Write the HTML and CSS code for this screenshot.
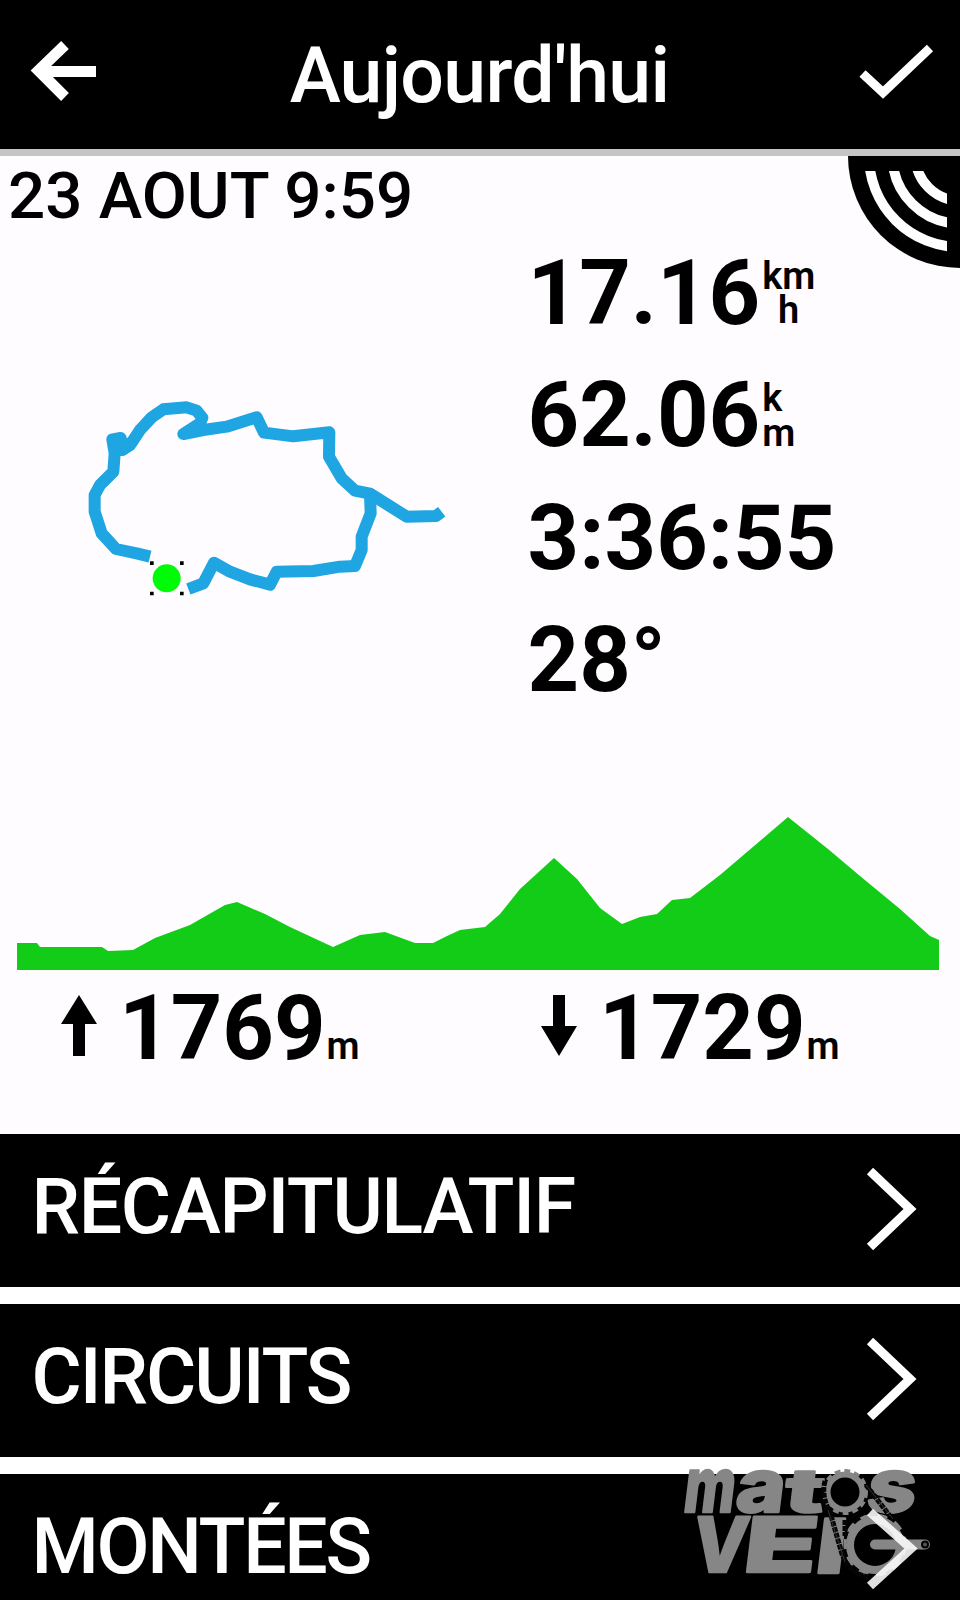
FILE: index.html
```html
<!DOCTYPE html>
<html lang="fr">
<head>
<meta charset="utf-8">
<title>Aujourd'hui</title>
<link rel="stylesheet" href="styles.css">
</head>
<body>
<div class="screen">
  <header class="topbar">
    <svg class="icon" width="72" height="64" viewBox="28 38 72 64"><path d="M65 45 38.500 70.500 65 97M40 71.500H96" fill="none" stroke="#fff" stroke-width="11"/></svg>
    <h1 class="title">Aujourd'hui</h1>
    <svg class="icon" width="78" height="64" viewBox="856 40 78 64"><path d="M862.500 73.500 883 92.500 930 48" fill="none" stroke="#fff" stroke-width="9"/></svg>
  </header>

  <main class="summary">
    <svg class="signal" width="112" height="112" viewBox="0 0 112 112">
      <defs><clipPath id="waves"><rect x="0" y="15" width="99" height="97"/></clipPath></defs>
      <circle cx="112" cy="0" r="112"/>
      <g clip-path="url(#waves)" fill="none" stroke="#fff" stroke-width="10">
        <circle cx="112" cy="0" r="91"/><circle cx="112" cy="0" r="67.500"/><circle cx="112" cy="0" r="44.500"/>
      </g>
    </svg>
    <p class="date">23 AOUT 9:59</p>
    <div class="overview">
      <svg class="track" width="420" height="250" viewBox="0 0 1260 750">
        <g fill="none" stroke="#1ea5e2" stroke-width="36" stroke-linejoin="round">
          <path d="M270 560 230 550 168 537 125 490 104 425 104 375 120 345 160 305 164 250 157 208 182 204 187 240 215 218 240 180 275 142 310 118 380 112 410 122 427 143 420 160 370 192 430 180 500 170 590 142 612 188 700 199 808 187 807 260 845 325 885 362 930 371 1040 440 1128 438 1145 425"/>
          <path d="M160 212 210 225 185 240M930 371 932 430 905 500 905 540 885 588 840 590 760 603 650 605 630 644 570 628 510 605 462 578 430 640 385 657"/>
        </g>
        <circle cx="320" cy="625" r="42" fill="#00fb08"/>
        <path d="M270 574h11v11h-11zM360 574h11v11h-11zM270 665h11v11h-11zM360 665h11v11h-11z"/>
      </svg>
      <ul class="stats">
        <li>17.16<span class="unit centered"><span>km</span><span>h</span></span></li>
        <li>62.06<span class="unit"><span>k</span><span>m</span></span></li>
        <li>3:36:55</li>
        <li>28°</li>
      </ul>
    </div>
    <svg class="profile" width="960" height="155" viewBox="0 816 960 155">
      <path fill="#13cc18" d="M17 943H37L40 947H102L108 951 133 950 155 938 190 925 225 905 237 902 265 914 290 927 333 947 360 935 385 932 415 943 433 943 447 936 460 930 485 927 500 914 520 889 554 858 577 879 600 908 622 924 640 917 657 914 672 900 690 898 720 875 788 817 828 849 860 876 900 909 930 936 939 940V970H17Z"/>
    </svg>
    <div class="elevation">
      <div class="climb">
        <svg width="36" height="61" viewBox="0 0 36 61"><path d="M18 0 36 29H24V61H12V29H0Z"/></svg>
        <span class="value">1769</span><span class="metre">m</span>
      </div>
      <div class="climb">
        <svg width="36" height="61" viewBox="0 0 36 61"><path d="M18 61 36 31H24V0H12V31H0Z"/></svg>
        <span class="value">1729</span><span class="metre">m</span>
      </div>
    </div>
  </main>

  <nav class="menu">
    <a class="item"><span class="recap">RÉCAPITULATIF</span><svg class="chevron" width="52" height="84" viewBox="0 0 52 84"><path d="M5 4 45 42 5 80"/></svg></a>
    <a class="item"><span class="circuits">CIRCUITS</span><svg class="chevron" width="52" height="84" viewBox="0 0 52 84"><path d="M5 4 45 42 5 80"/></svg></a>
    <a class="item"><span class="montees">MONTÉES</span></a>
  </nav>

  <svg class="brand" width="280" height="135" viewBox="660 1465 280 135">
    <g class="letters">
      <text transform="translate(682 1512) skewX(-7)" font-size="76" textLength="51" lengthAdjust="spacingAndGlyphs">m</text>
      <text transform="translate(734 1512) skewX(-7)" font-size="74" textLength="49" lengthAdjust="spacingAndGlyphs">a</text>
      <text transform="translate(783 1512) skewX(-7)" font-size="60" textLength="39" lengthAdjust="spacingAndGlyphs">t</text>
      <text transform="translate(865 1512) skewX(-7)" font-size="74" textLength="49" lengthAdjust="spacingAndGlyphs">s</text>
      <text transform="translate(690 1572) skewX(-7)" font-size="76" textLength="55" lengthAdjust="spacingAndGlyphs">V</text>
      <text transform="translate(741 1572) skewX(-7)" font-size="76" textLength="74" lengthAdjust="spacingAndGlyphs">E</text>
      <text transform="translate(813 1573) skewX(-7)" font-size="75" textLength="31" lengthAdjust="spacingAndGlyphs">l</text>
    </g>
    <g fill="none">
      <circle cx="845" cy="1492" r="17.500" fill="#000" stroke="#868686" stroke-width="6"/>
      <circle cx="845" cy="1492" r="21.500" stroke="#868686" stroke-width="3" stroke-dasharray="6 4"/>
      <circle cx="875" cy="1545" r="25" fill="#000" stroke="#868686" stroke-width="8"/>
      <circle cx="875" cy="1545" r="30" stroke="#868686" stroke-width="3" stroke-dasharray="10 8"/>
      <path d="M825 1481Q821 1496 830 1512L842 1554Q850 1575 870 1577M866 1485 890 1516M845 1520V1536" stroke="#050505" stroke-width="5" stroke-dasharray="5 1"/>
      <path d="M866 1485 893 1519M828 1510 845 1562" stroke="#333" stroke-width="1"/>
      <path d="M875 1544.500H925" stroke="#868686" stroke-width="10" stroke-linecap="round"/>
      <circle cx="925" cy="1544.500" r="3" fill="#555" stroke="#000" stroke-width="2"/>
    </g>
    <path d="M870 1512 911 1548.500 870 1586" fill="none" stroke="#fff" stroke-opacity=".88" stroke-width="9"/>
  </svg>
</div>
</body>
</html>
```
FILE: styles.css
```css
* { box-sizing: border-box; }
body { margin: 0; background: #fefcfe; }
.screen {
  position: relative;
  width: 960px;
  height: 1600px;
  overflow: hidden;
  font-family: Roboto, "Liberation Sans", sans-serif;
  color: #000;
  display: flex;
  flex-direction: column;
}
.topbar {
  flex: none;
  height: 156px;
  padding: 0 26px 0 28px;
  background: #000;
  border-bottom: 7px solid #c5c5c5;
  display: flex;
  justify-content: space-between;
}
.icon { display: block; margin-top: 38px; }
.icon:last-child { margin-top: 40px; }
.title {
  margin: 0;
  font-size: 77px;
  line-height: 152px;
  font-weight: 500;
  letter-spacing: -0.7px;
  padding-left: 3px;
  color: #fff;
  white-space: nowrap;
}
.summary { flex: none; height: 978px; position: relative; }
.signal { position: absolute; top: 0; right: 0; display: block; }
.date {
  margin: 0;
  padding-left: 8px;
  height: 75px;
  font-size: 65.5px;
  line-height: 79px;
  font-weight: 500;
  white-space: nowrap;
}
.overview { height: 585px; display: flex; padding-left: 60px; }
.track { display: block; flex: none; margin-top: 139px; }
.stats {
  list-style: none;
  margin: 0;
  padding: 1.5px 0 0 47.5px;
  font-size: 90px;
  line-height: 122.5px;
  font-weight: 700;
}
.stats li { display: flex; height: 122.5px; white-space: nowrap; }
.unit {
  display: flex;
  flex-direction: column;
  margin: 26px 0 0 2px;
  font-size: 38px;
  line-height: 34.5px;
  font-weight: 600;
}
.centered { align-items: center; }
.profile { display: block; }
.elevation { display: flex; height: 105px; }
.climb {
  width: 480px;
  padding-left: 61px;
  display: flex;
  line-height: 116px;
}
.climb svg { margin-top: 24px; }
.value { font-size: 90px; font-weight: 700; margin-left: 22px; }
.metre { font-size: 38px; font-weight: 600; line-height: 150px; margin-left: 1px; }
.menu { display: flex; flex-direction: column; gap: 17px; background: #fff; }
.item {
  flex: none;
  height: 153px;
  padding: 0 43px 0 31.5px;
  background: #000;
  color: #fff;
  display: flex;
  justify-content: space-between;
  font-size: 77px;
  line-height: 146px;
  font-weight: 500;
  white-space: nowrap;
}
.recap { letter-spacing: -1.3px; }
.circuits { letter-spacing: -2px; }
.montees { letter-spacing: -2.3px; }
.chevron { display: block; margin-top: 33px; fill: none; stroke: #fff; stroke-width: 9; }
.brand { position: absolute; left: 660px; top: 1465px; overflow: visible; }
.letters {
  font-family: Inter, Roboto, sans-serif;
  font-weight: 800;
  fill: #868686;
  stroke: #868686;
  stroke-width: 2.5;
  stroke-linejoin: round;
}
```
